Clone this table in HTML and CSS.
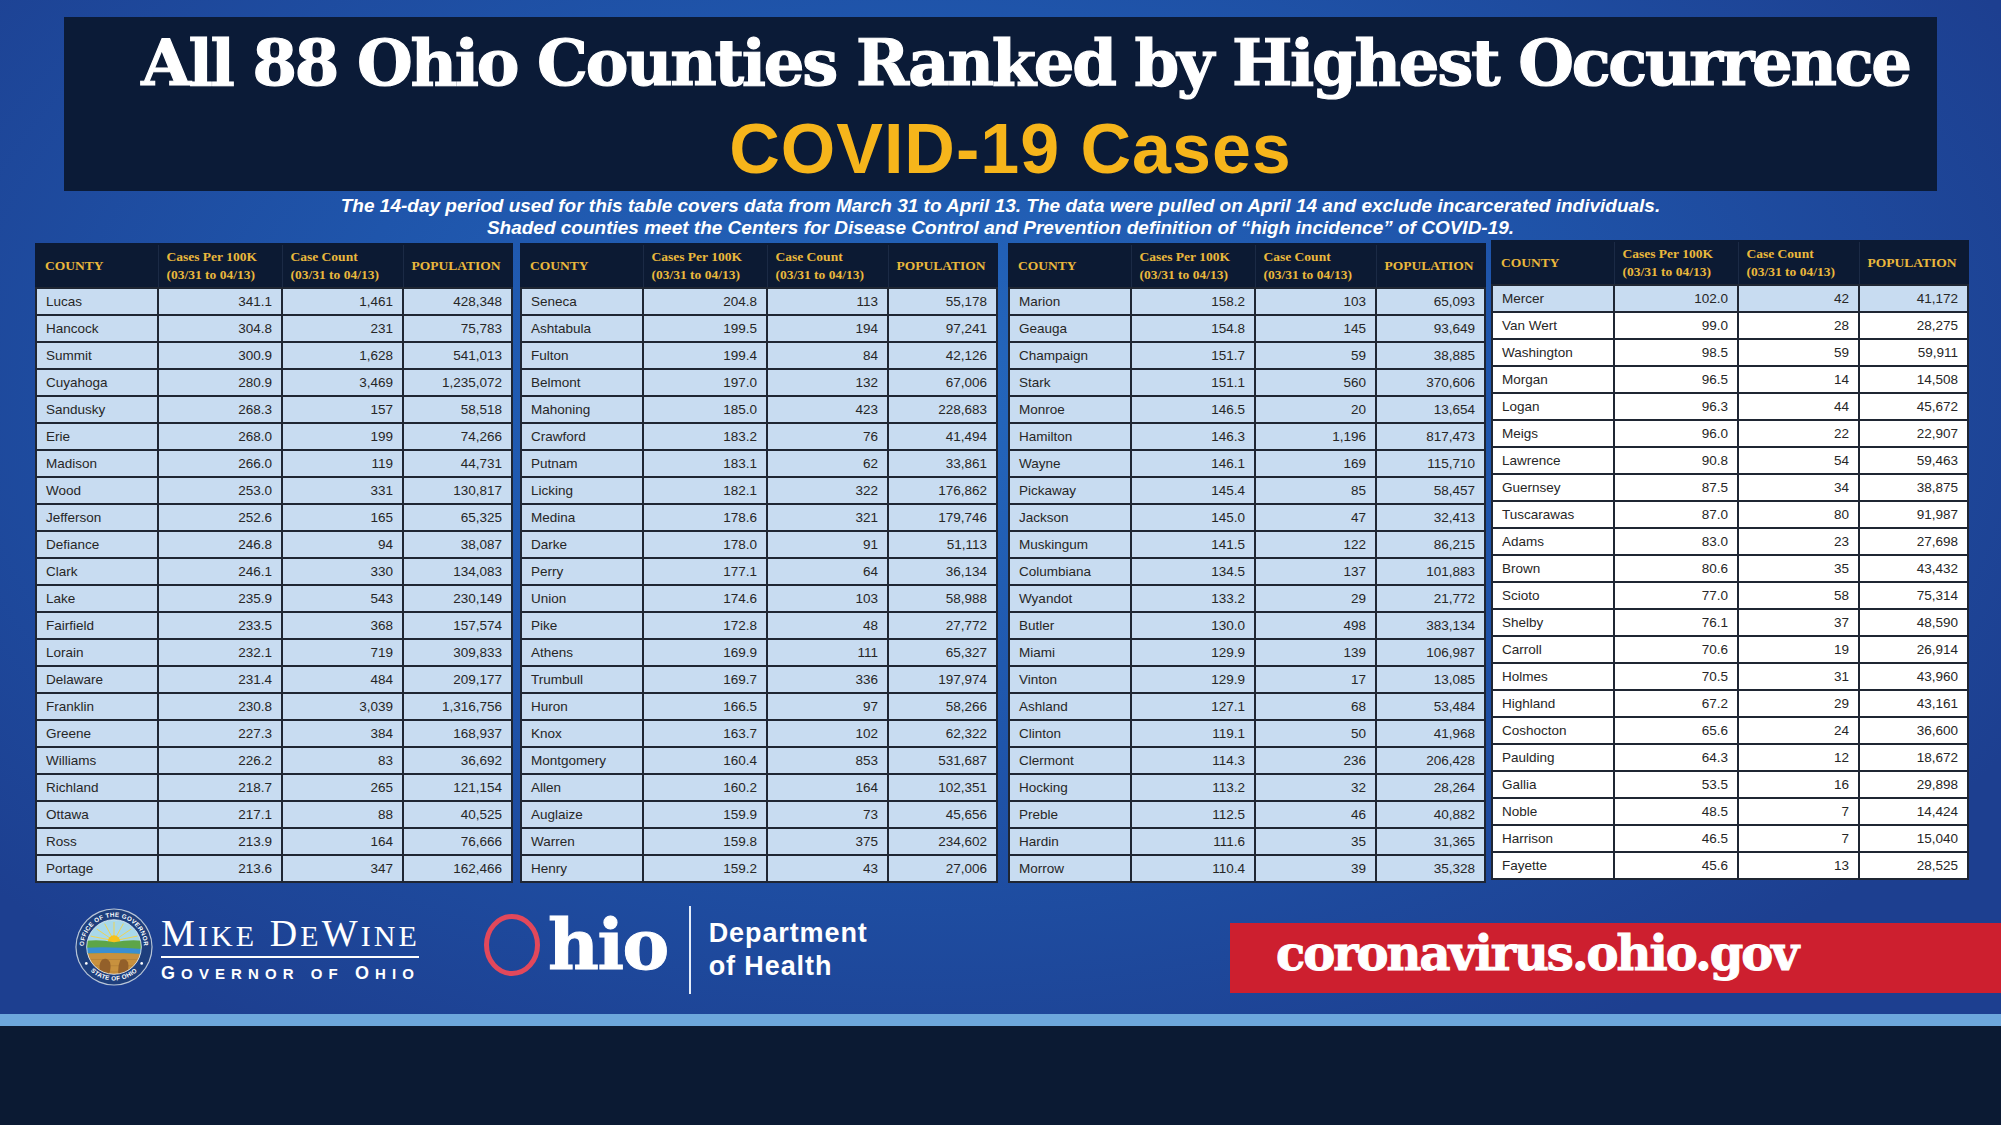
FILE: index.html
```html
<!DOCTYPE html>
<html lang="en">
<head>
<meta charset="utf-8">
<title>All 88 Ohio Counties Ranked by Highest Occurrence – COVID-19 Cases</title>
<link rel="stylesheet" href="styles.css">
</head>
<body>
<div class="page">
  <div class="main">
    <header class="title-box">
      <h1 class="title">All 88 Ohio Counties Ranked by Highest Occurrence</h1>
      <h2 class="covid">COVID-19 Cases</h2>
    </header>
    <div class="subtitle">
      <div class="sub-line">The 14-day period used for this table covers data from March 31 to April 13. The data were pulled on April 14 and exclude incarcerated individuals.</div>
      <div class="sub-line">Shaded counties meet the Centers for Disease Control and Prevention definition of “high incidence” of COVID-19.</div>
    </div>

    <div class="tables">
      <table class="tbl">
        <colgroup><col class="c1"><col class="c2"><col class="c3"><col class="c4"></colgroup>
        <thead><tr><th>COUNTY</th><th>Cases Per 100K<br>(03/31 to 04/13)</th><th>Case Count<br>(03/31 to 04/13)</th><th>POPULATION</th></tr></thead>
        <tbody>
          <tr><td>Lucas</td><td>341.1</td><td>1,461</td><td>428,348</td></tr>
          <tr><td>Hancock</td><td>304.8</td><td>231</td><td>75,783</td></tr>
          <tr><td>Summit</td><td>300.9</td><td>1,628</td><td>541,013</td></tr>
          <tr><td>Cuyahoga</td><td>280.9</td><td>3,469</td><td>1,235,072</td></tr>
          <tr><td>Sandusky</td><td>268.3</td><td>157</td><td>58,518</td></tr>
          <tr><td>Erie</td><td>268.0</td><td>199</td><td>74,266</td></tr>
          <tr><td>Madison</td><td>266.0</td><td>119</td><td>44,731</td></tr>
          <tr><td>Wood</td><td>253.0</td><td>331</td><td>130,817</td></tr>
          <tr><td>Jefferson</td><td>252.6</td><td>165</td><td>65,325</td></tr>
          <tr><td>Defiance</td><td>246.8</td><td>94</td><td>38,087</td></tr>
          <tr><td>Clark</td><td>246.1</td><td>330</td><td>134,083</td></tr>
          <tr><td>Lake</td><td>235.9</td><td>543</td><td>230,149</td></tr>
          <tr><td>Fairfield</td><td>233.5</td><td>368</td><td>157,574</td></tr>
          <tr><td>Lorain</td><td>232.1</td><td>719</td><td>309,833</td></tr>
          <tr><td>Delaware</td><td>231.4</td><td>484</td><td>209,177</td></tr>
          <tr><td>Franklin</td><td>230.8</td><td>3,039</td><td>1,316,756</td></tr>
          <tr><td>Greene</td><td>227.3</td><td>384</td><td>168,937</td></tr>
          <tr><td>Williams</td><td>226.2</td><td>83</td><td>36,692</td></tr>
          <tr><td>Richland</td><td>218.7</td><td>265</td><td>121,154</td></tr>
          <tr><td>Ottawa</td><td>217.1</td><td>88</td><td>40,525</td></tr>
          <tr><td>Ross</td><td>213.9</td><td>164</td><td>76,666</td></tr>
          <tr><td>Portage</td><td>213.6</td><td>347</td><td>162,466</td></tr>
        </tbody>
      </table>

      <table class="tbl">
        <colgroup><col class="c1"><col class="c2"><col class="c3"><col class="c4"></colgroup>
        <thead><tr><th>COUNTY</th><th>Cases Per 100K<br>(03/31 to 04/13)</th><th>Case Count<br>(03/31 to 04/13)</th><th>POPULATION</th></tr></thead>
        <tbody>
          <tr><td>Seneca</td><td>204.8</td><td>113</td><td>55,178</td></tr>
          <tr><td>Ashtabula</td><td>199.5</td><td>194</td><td>97,241</td></tr>
          <tr><td>Fulton</td><td>199.4</td><td>84</td><td>42,126</td></tr>
          <tr><td>Belmont</td><td>197.0</td><td>132</td><td>67,006</td></tr>
          <tr><td>Mahoning</td><td>185.0</td><td>423</td><td>228,683</td></tr>
          <tr><td>Crawford</td><td>183.2</td><td>76</td><td>41,494</td></tr>
          <tr><td>Putnam</td><td>183.1</td><td>62</td><td>33,861</td></tr>
          <tr><td>Licking</td><td>182.1</td><td>322</td><td>176,862</td></tr>
          <tr><td>Medina</td><td>178.6</td><td>321</td><td>179,746</td></tr>
          <tr><td>Darke</td><td>178.0</td><td>91</td><td>51,113</td></tr>
          <tr><td>Perry</td><td>177.1</td><td>64</td><td>36,134</td></tr>
          <tr><td>Union</td><td>174.6</td><td>103</td><td>58,988</td></tr>
          <tr><td>Pike</td><td>172.8</td><td>48</td><td>27,772</td></tr>
          <tr><td>Athens</td><td>169.9</td><td>111</td><td>65,327</td></tr>
          <tr><td>Trumbull</td><td>169.7</td><td>336</td><td>197,974</td></tr>
          <tr><td>Huron</td><td>166.5</td><td>97</td><td>58,266</td></tr>
          <tr><td>Knox</td><td>163.7</td><td>102</td><td>62,322</td></tr>
          <tr><td>Montgomery</td><td>160.4</td><td>853</td><td>531,687</td></tr>
          <tr><td>Allen</td><td>160.2</td><td>164</td><td>102,351</td></tr>
          <tr><td>Auglaize</td><td>159.9</td><td>73</td><td>45,656</td></tr>
          <tr><td>Warren</td><td>159.8</td><td>375</td><td>234,602</td></tr>
          <tr><td>Henry</td><td>159.2</td><td>43</td><td>27,006</td></tr>
        </tbody>
      </table>

      <table class="tbl">
        <colgroup><col class="c1"><col class="c2"><col class="c3"><col class="c4"></colgroup>
        <thead><tr><th>COUNTY</th><th>Cases Per 100K<br>(03/31 to 04/13)</th><th>Case Count<br>(03/31 to 04/13)</th><th>POPULATION</th></tr></thead>
        <tbody>
          <tr><td>Marion</td><td>158.2</td><td>103</td><td>65,093</td></tr>
          <tr><td>Geauga</td><td>154.8</td><td>145</td><td>93,649</td></tr>
          <tr><td>Champaign</td><td>151.7</td><td>59</td><td>38,885</td></tr>
          <tr><td>Stark</td><td>151.1</td><td>560</td><td>370,606</td></tr>
          <tr><td>Monroe</td><td>146.5</td><td>20</td><td>13,654</td></tr>
          <tr><td>Hamilton</td><td>146.3</td><td>1,196</td><td>817,473</td></tr>
          <tr><td>Wayne</td><td>146.1</td><td>169</td><td>115,710</td></tr>
          <tr><td>Pickaway</td><td>145.4</td><td>85</td><td>58,457</td></tr>
          <tr><td>Jackson</td><td>145.0</td><td>47</td><td>32,413</td></tr>
          <tr><td>Muskingum</td><td>141.5</td><td>122</td><td>86,215</td></tr>
          <tr><td>Columbiana</td><td>134.5</td><td>137</td><td>101,883</td></tr>
          <tr><td>Wyandot</td><td>133.2</td><td>29</td><td>21,772</td></tr>
          <tr><td>Butler</td><td>130.0</td><td>498</td><td>383,134</td></tr>
          <tr><td>Miami</td><td>129.9</td><td>139</td><td>106,987</td></tr>
          <tr><td>Vinton</td><td>129.9</td><td>17</td><td>13,085</td></tr>
          <tr><td>Ashland</td><td>127.1</td><td>68</td><td>53,484</td></tr>
          <tr><td>Clinton</td><td>119.1</td><td>50</td><td>41,968</td></tr>
          <tr><td>Clermont</td><td>114.3</td><td>236</td><td>206,428</td></tr>
          <tr><td>Hocking</td><td>113.2</td><td>32</td><td>28,264</td></tr>
          <tr><td>Preble</td><td>112.5</td><td>46</td><td>40,882</td></tr>
          <tr><td>Hardin</td><td>111.6</td><td>35</td><td>31,365</td></tr>
          <tr><td>Morrow</td><td>110.4</td><td>39</td><td>35,328</td></tr>
        </tbody>
      </table>

      <table class="tbl tbl-last">
        <colgroup><col class="c1"><col class="c2"><col class="c3"><col class="c4"></colgroup>
        <thead><tr><th>COUNTY</th><th>Cases Per 100K<br>(03/31 to 04/13)</th><th>Case Count<br>(03/31 to 04/13)</th><th>POPULATION</th></tr></thead>
        <tbody>
          <tr><td>Mercer</td><td>102.0</td><td>42</td><td>41,172</td></tr>
          <tr class="plain"><td>Van Wert</td><td>99.0</td><td>28</td><td>28,275</td></tr>
          <tr class="plain"><td>Washington</td><td>98.5</td><td>59</td><td>59,911</td></tr>
          <tr class="plain"><td>Morgan</td><td>96.5</td><td>14</td><td>14,508</td></tr>
          <tr class="plain"><td>Logan</td><td>96.3</td><td>44</td><td>45,672</td></tr>
          <tr class="plain"><td>Meigs</td><td>96.0</td><td>22</td><td>22,907</td></tr>
          <tr class="plain"><td>Lawrence</td><td>90.8</td><td>54</td><td>59,463</td></tr>
          <tr class="plain"><td>Guernsey</td><td>87.5</td><td>34</td><td>38,875</td></tr>
          <tr class="plain"><td>Tuscarawas</td><td>87.0</td><td>80</td><td>91,987</td></tr>
          <tr class="plain"><td>Adams</td><td>83.0</td><td>23</td><td>27,698</td></tr>
          <tr class="plain"><td>Brown</td><td>80.6</td><td>35</td><td>43,432</td></tr>
          <tr class="plain"><td>Scioto</td><td>77.0</td><td>58</td><td>75,314</td></tr>
          <tr class="plain"><td>Shelby</td><td>76.1</td><td>37</td><td>48,590</td></tr>
          <tr class="plain"><td>Carroll</td><td>70.6</td><td>19</td><td>26,914</td></tr>
          <tr class="plain"><td>Holmes</td><td>70.5</td><td>31</td><td>43,960</td></tr>
          <tr class="plain"><td>Highland</td><td>67.2</td><td>29</td><td>43,161</td></tr>
          <tr class="plain"><td>Coshocton</td><td>65.6</td><td>24</td><td>36,600</td></tr>
          <tr class="plain"><td>Paulding</td><td>64.3</td><td>12</td><td>18,672</td></tr>
          <tr class="plain"><td>Gallia</td><td>53.5</td><td>16</td><td>29,898</td></tr>
          <tr class="plain"><td>Noble</td><td>48.5</td><td>7</td><td>14,424</td></tr>
          <tr class="plain"><td>Harrison</td><td>46.5</td><td>7</td><td>15,040</td></tr>
          <tr class="plain"><td>Fayette</td><td>45.6</td><td>13</td><td>28,525</td></tr>
        </tbody>
      </table>
    </div>

    <footer class="footer">
      <svg class="seal" width="78" height="78" viewBox="0 0 100 100" aria-label="Seal of the Office of the Governor, State of Ohio">
        <defs>
          <path id="arcTop" d="M 12.1 56.7 A 38.5 38.5 0 1 1 87.9 56.7"/>
          <path id="arcBot" d="M 7 50 A 43 43 0 0 0 93 50"/>
          <clipPath id="innerClip"><circle cx="50" cy="50" r="35"/></clipPath>
        </defs>
        <circle cx="50" cy="50" r="49.5" fill="#b9c6d8"/>
        <circle cx="50" cy="50" r="48" fill="#1e3f7d"/>
        <text class="seal-text"><textPath href="#arcTop" startOffset="50%" text-anchor="middle">OFFICE OF THE GOVERNOR</textPath></text>
        <text class="seal-text"><textPath href="#arcBot" startOffset="50%" text-anchor="middle">STATE OF OHIO</textPath></text>
        <circle cx="14.5" cy="71" r="1.7" fill="#ffffff"/>
        <circle cx="85.5" cy="71" r="1.7" fill="#ffffff"/>
        <g clip-path="url(#innerClip)">
          <rect x="0" y="0" width="100" height="100" fill="#a9d9ea"/>
          <g stroke="#f3d34a" stroke-width="1.2">
            <line x1="50" y1="42" x2="50" y2="18"/>
            <line x1="50" y1="42" x2="38" y2="20"/>
            <line x1="50" y1="42" x2="62" y2="20"/>
            <line x1="50" y1="42" x2="28" y2="27"/>
            <line x1="50" y1="42" x2="72" y2="27"/>
            <line x1="50" y1="42" x2="20" y2="36"/>
            <line x1="50" y1="42" x2="80" y2="36"/>
          </g>
          <circle cx="50" cy="43" r="8" fill="#f6c21c"/>
          <path d="M 0 45 Q 25 38 50 44 Q 75 39 100 44 L 100 60 L 0 60 Z" fill="#5da548"/>
          <path d="M 0 52 Q 40 48 100 54 L 100 60 Q 50 56 0 59 Z" fill="#3a8fd2"/>
          <path d="M 0 59 Q 50 56 100 60 L 100 100 L 0 100 Z" fill="#c8913e"/>
          <path d="M 10 66 L 90 66 M 8 74 L 92 74 M 10 82 L 90 82" stroke="#b27d33" stroke-width="0.8"/>
          <path d="M 33 86 Q 29 72 35 66 Q 42 63 45 70 Q 47 80 42 88 Z" fill="#93602a"/>
          <path d="M 56 88 Q 54 76 58 67 Q 65 63 68 70 Q 70 80 64 86 Z" fill="#93602a"/>
        </g>
        <circle cx="50" cy="50" r="35" fill="none" stroke="#e8eef6" stroke-width="1"/>
      </svg>

      <div class="gov">
        <div class="gov-name">M<span class="sc">IKE</span> D<span class="sc">E</span>W<span class="sc">INE</span></div>
        <div class="gov-rule"></div>
        <div class="gov-title">G<span class="sc">OVERNOR</span> <span class="sc">OF</span> O<span class="sc">HIO</span></div>
      </div>

      <div class="ohio-logo">
        <svg class="ohio-o" width="56" height="62" viewBox="0 0 56 62" aria-hidden="true">
          <ellipse cx="28" cy="31" rx="25.5" ry="28.5" fill="none" stroke="#e2485b" stroke-width="5"/>
        </svg>
        <span class="ohio-word">hio</span>
      </div>
      <div class="divider"></div>
      <div class="dept">Department<br>of Health</div>

      <div class="banner"><span>coronavirus.ohio.gov</span></div>
    </footer>
  </div>
  <div class="stripe"></div>
  <div class="bottom"></div>
</div>
</body>
</html>
```

FILE: styles.css
```css
* { box-sizing: border-box; }

html, body {
  margin: 0;
  padding: 0;
  background: #0b1a33;
}

.page {
  width: 2001px;
  height: 1125px;
  overflow: hidden;
  font-family: "Liberation Sans", Arial, sans-serif;
}

.main {
  height: 1014px;
  padding-top: 17px;
  display: flex;
  flex-direction: column;
  background:
    radial-gradient(ellipse 62% 75% at 46% 38%, #2467bd 0%, #1f55ab 48%, #1d3f90 100%);
}

/* ---------- Title ---------- */
.title-box {
  margin: 0 64px;
  height: 174px;
  background: #0b1b37;
  padding-top: 14px;
  text-align: center;
}

.title {
  margin: 0;
  padding-left: 50px;
  font-family: "DejaVu Serif", "Liberation Serif", serif;
  font-weight: bold;
  font-size: 64px;
  line-height: 64px;
  letter-spacing: -2.3px;
  -webkit-text-stroke: 1.2px #ffffff;
  color: #ffffff;
  white-space: nowrap;
}

.covid {
  margin: 19px 0 0;
  padding-left: 20px;
  font-family: "Liberation Sans", Arial, sans-serif;
  font-weight: bold;
  font-size: 70px;
  line-height: 70px;
  letter-spacing: 1px;
  color: #f6b51b;
  white-space: nowrap;
}

/* ---------- Subtitle ---------- */
.subtitle {
  margin-top: 4px;
  text-align: center;
  color: #ffffff;
  font-family: "Liberation Sans", Arial, sans-serif;
  font-style: italic;
  font-weight: bold;
  font-size: 19px;
  line-height: 22px;
  white-space: nowrap;
}

/* ---------- Tables ---------- */
.tables {
  display: flex;
  align-items: flex-start;
  padding-left: 35px;
  margin-top: 4px;
}

.tbl {
  width: 476px;
  flex: none;
  table-layout: fixed;
  border-collapse: collapse;
  border: 2px solid #0c1a33;
}

.tbl:nth-child(2) { margin-left: 7px; }
.tbl:nth-child(3) { margin-left: 10px; }
.tbl-last { margin-left: 5px; margin-top: -3px; }

.c1 { width: 122px; }
.c2 { width: 124px; }
.c3 { width: 121px; }
.c4 { width: 109px; }

.tbl th {
  height: 44px;
  padding: 0 8px;
  background: #0c1a33;
  border: 1px solid #1b2a45;
  color: #eab83c;
  font-family: "Liberation Serif", "DejaVu Serif", serif;
  font-weight: bold;
  font-size: 13.5px;
  line-height: 18px;
  text-align: left;
  vertical-align: middle;
  white-space: nowrap;
}

.tbl td {
  height: 27px;
  padding: 0 9px;
  background: #c8dcf1;
  border: 2px solid #1f2633;
  color: #262626;
  font-family: "Liberation Sans", Arial, sans-serif;
  font-size: 13.5px;
  line-height: 16px;
  white-space: nowrap;
  vertical-align: middle;
}

.tbl td + td { text-align: right; }

.tbl tr.plain td { background: #ffffff; }

/* ---------- Footer ---------- */
.footer {
  flex: 1;
  display: flex;
  align-items: flex-start;
  padding-left: 75px;
}

.seal {
  display: block;
  margin-top: 25px;
  flex: none;
}

.seal-text {
  font-family: "Liberation Sans", Arial, sans-serif;
  font-weight: bold;
  font-size: 8px;
  fill: #ffffff;
  letter-spacing: 0.4px;
}

.gov {
  margin-left: 8px;
  margin-top: 31px;
  width: 258px;
  flex: none;
  color: #ffffff;
}

.gov-name {
  font-family: "Liberation Serif", "Times New Roman", serif;
  font-size: 38px;
  line-height: 38px;
  letter-spacing: 3.1px;
  white-space: nowrap;
}

.gov-name .sc { font-size: 30px; }

.gov-rule {
  margin-top: 1px;
  height: 2px;
  background: #ffffff;
}

.gov-title {
  margin-top: 6px;
  font-family: "Liberation Sans", Arial, sans-serif;
  font-weight: bold;
  font-size: 18px;
  line-height: 18px;
  letter-spacing: 6.1px;
  white-space: nowrap;
}

.gov-title .sc { font-size: 15px; }

.ohio-logo {
  display: flex;
  align-items: flex-start;
  margin-left: 65px;
  margin-top: 27px;
  flex: none;
}

.ohio-o {
  display: block;
  margin-top: 4px;
  flex: none;
}

.ohio-word {
  margin-left: 8px;
  font-family: "DejaVu Serif", "Liberation Serif", serif;
  font-weight: bold;
  font-size: 70px;
  line-height: 70px;
  letter-spacing: -1.5px;
  -webkit-text-stroke: 1px #ffffff;
  color: #ffffff;
}

.divider {
  width: 2px;
  height: 88px;
  margin-left: 21px;
  margin-top: 23px;
  flex: none;
  background: #e6eefa;
}

.dept {
  margin-left: 18px;
  margin-top: 34px;
  flex: none;
  font-family: "Liberation Sans", Arial, sans-serif;
  font-weight: bold;
  font-size: 27px;
  line-height: 33px;
  letter-spacing: 0.9px;
  color: #ffffff;
}

.banner {
  margin-left: auto;
  margin-top: 40px;
  width: 771px;
  height: 70px;
  flex: none;
  background: #cd1f2f;
  padding-left: 46px;
  font-family: "DejaVu Serif", "Liberation Serif", serif;
  font-weight: bold;
  font-size: 48px;
  line-height: 60px;
  letter-spacing: -2px;
  -webkit-text-stroke: 1px #ffffff;
  color: #ffffff;
  white-space: nowrap;
}

/* ---------- Bottom bands ---------- */
.stripe {
  height: 12px;
  background: #6da7dc;
}

.bottom {
  height: 99px;
  background: #0b1a33;
}
```
